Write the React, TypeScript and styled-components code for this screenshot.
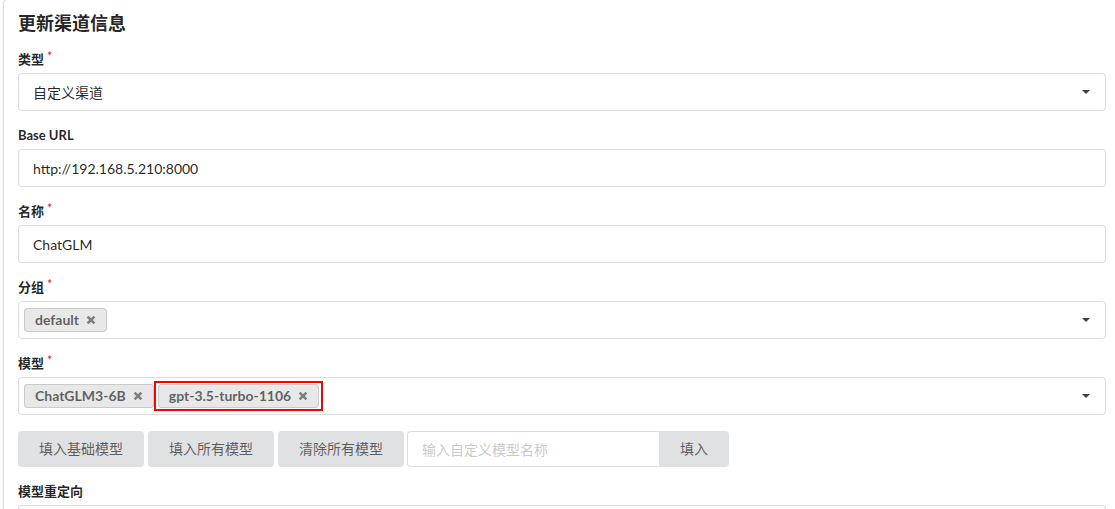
import React from 'react';
import styled, { createGlobalStyle } from 'styled-components';

const GlobalStyle = createGlobalStyle`
  html,
  body {
    margin: 0;
    overflow: hidden;
    background: #fff;
  }

  body {
    font-family: Lato, 'Noto Sans CJK SC', sans-serif;
    font-size: 14px;
    line-height: 20px;
    color: rgba(0, 0, 0, 0.87);
  }

  * {
    box-sizing: border-box;
  }
`;

const Page = styled.div`
  padding-left: 3px;
`;

const Segment = styled.div`
  width: 1118px;
  margin-top: -1px;
  padding: 12px 14px 14px;
  border: 1px solid rgba(34, 36, 38, 0.15);
  border-radius: 4px;
  box-shadow: 0 1px 2px 0 rgba(34, 36, 38, 0.15);
`;

const Header = styled.h3`
  margin: 0 0 14px;
  font-size: 18px;
  font-weight: 700;
  line-height: 23px;
`;

const Field = styled.div`
  margin-bottom: 14px;
`;

const Label = styled.label<{ required?: boolean }>`
  display: block;
  margin-bottom: 4px;
  font-size: 13px;
  font-weight: 700;
  line-height: 20px;

  &::after {
    content: ${(p) => (p.required ? "'*'" : 'none')};
    display: inline-block;
    vertical-align: top;
    margin: -3px 0 0 3px;
    color: #db2828;
    font-weight: 400;
  }
`;

const Input = styled.input`
  display: block;
  width: 100%;
  height: 38px;
  padding: 9px 14px;
  border: 1px solid rgba(34, 36, 38, 0.15);
  border-radius: 4px;
  font-family: inherit;
  font-size: 14px;
  line-height: 17px;
  color: rgba(0, 0, 0, 0.87);
  outline: none;

  &::placeholder {
    color: rgba(191, 191, 191, 0.87);
  }
`;

const Select = styled.div<{ multiple?: boolean }>`
  display: flex;
  align-items: center;
  flex-wrap: wrap;
  min-height: 38px;
  padding: ${(p) => (p.multiple ? '3px 14px 3px 5px' : '9px 14px')};
  border: 1px solid rgba(34, 36, 38, 0.15);
  border-radius: 4px;
  font-size: 14px;
  line-height: 17px;
`;

const Caret = styled.span`
  margin-left: auto;
  margin-right: 1px;
  width: 0;
  height: 0;
  border-left: 4px solid transparent;
  border-right: 4px solid transparent;
  border-top: 4px solid rgba(0, 0, 0, 0.75);
`;

const Tag = styled.span<{ marked?: boolean }>`
  position: relative;
  display: inline-flex;
  align-items: center;
  margin: 2px 4px 2px 0;
  padding: 5px 11px;
  background: #e8e8e8;
  border-radius: 4px;
  box-shadow: inset 0 0 0 1px rgba(34, 36, 38, 0.15);
  color: rgba(0, 0, 0, 0.6);
  font-weight: 700;
  font-size: 14px;
  line-height: 14px;

  &::after {
    content: ${(p) => (p.marked ? "''" : 'none')};
    position: absolute;
    inset: -3px -4px;
    border: 2px solid #f00;
  }
`;

const Remove = styled.svg`
  margin-left: 7px;
  opacity: 0.45;
`;

const ButtonRow = styled.div`
  display: flex;
  gap: 4px;
  padding-top: 2px;
  margin-bottom: 14px;
`;

const Button = styled.button<{ attached?: boolean }>`
  height: 36px;
  padding: 0 21px;
  border: none;
  border-radius: ${(p) => (p.attached ? '0 4px 4px 0' : '4px')};
  background: #e0e1e2;
  color: rgba(0, 0, 0, 0.6);
  font-family: inherit;
  font-size: 14px;
  line-height: 14px;
  white-space: nowrap;
`;

const ActionInput = styled.div`
  display: flex;
  width: 322px;
  margin-left: -1px;
`;

const ActionField = styled(Input)`
  height: 36px;
  flex: 1;
  border-radius: 4px 0 0 4px;
  border-right-color: transparent;
`;

const TextArea = styled.textarea`
  display: block;
  width: 100%;
  height: 120px;
  border: 1px solid rgba(34, 36, 38, 0.15);
  border-radius: 4px;
  resize: none;
`;

function Cross() {
  return (
    <Remove width="10" height="10" viewBox="0 0 10 10">
      <path d="M1.6 1.6L8.4 8.4M8.4 1.6L1.6 8.4" stroke="#000" strokeWidth="2.6" />
    </Remove>
  );
}

function App() {
  return (
    <Page>
      <GlobalStyle />
      <Segment>
        <Header>更新渠道信息</Header>
        <Field>
          <Label required>类型</Label>
          <Select>
            自定义渠道
            <Caret />
          </Select>
        </Field>
        <Field>
          <Label>Base URL</Label>
          <Input defaultValue="http://192.168.5.210:8000" />
        </Field>
        <Field>
          <Label required>名称</Label>
          <Input defaultValue="ChatGLM" />
        </Field>
        <Field>
          <Label required>分组</Label>
          <Select multiple>
            <Tag>
              default
              <Cross />
            </Tag>
            <Caret />
          </Select>
        </Field>
        <Field>
          <Label required>模型</Label>
          <Select multiple>
            <Tag>
              ChatGLM3-6B
              <Cross />
            </Tag>
            <Tag marked>
              gpt-3.5-turbo-1106
              <Cross />
            </Tag>
            <Caret />
          </Select>
        </Field>
        <ButtonRow>
          <Button>填入基础模型</Button>
          <Button>填入所有模型</Button>
          <Button>清除所有模型</Button>
          <ActionInput>
            <ActionField placeholder="输入自定义模型名称" />
            <Button attached>填入</Button>
          </ActionInput>
        </ButtonRow>
        <Field>
          <Label>模型重定向</Label>
          <TextArea />
        </Field>
      </Segment>
    </Page>
  );
}

export default App;
